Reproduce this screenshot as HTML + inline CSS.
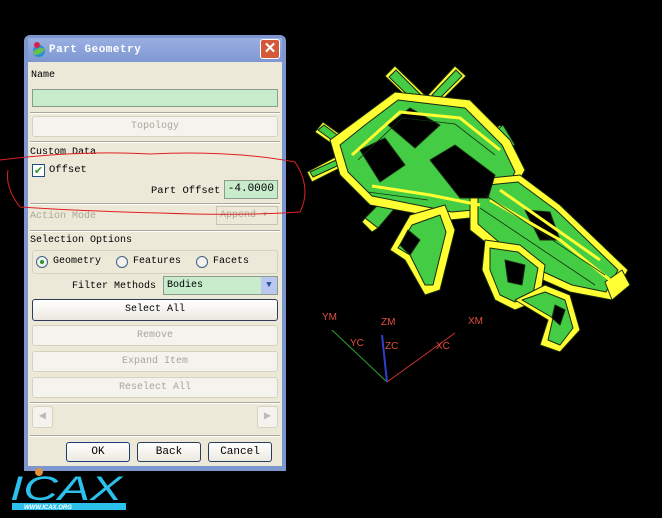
<!DOCTYPE html>
<html><head><meta charset="utf-8"><style>
*{margin:0;padding:0;box-sizing:border-box}
body{width:662px;height:518px;background:#000;position:relative;overflow:hidden;font-family:"Liberation Mono",monospace;font-size:10px;color:#000}
.a{position:absolute}
.dlg{left:24px;top:35px;width:262px;height:436px;background:#7d96cf;border-radius:6px 6px 0 0}
.body{left:28px;top:62px;width:254px;height:404px;background:#ece9d8}
.t{position:absolute;white-space:pre;line-height:12px}
.sep{position:absolute;left:30px;width:250px;height:2px;border-top:1px solid #aca899;border-bottom:1px solid #fff}
.btn{position:absolute;border:1px solid #d5d2c2;border-radius:3px;background:#f4f3ee;text-align:center;color:#a7a69a;line-height:19px}
.btnA{border:1px solid #2c3c5c;background:linear-gradient(#fff,#ece9df);color:#000}
.grn{position:absolute;background:#c7ebcb;border:1px solid #8c9c8c}
.rad{position:absolute;width:12px;height:12px;border:1px solid #3d5f8a;border-radius:50%;background:#f4f3ee}
</style></head><body>
<div class="a dlg"></div>
<div class="a" style="left:28px;top:38px;width:254px;height:24px;background:linear-gradient(#9ab0e2,#7f98d2)"></div>
<svg class="a" style="left:30px;top:40px" width="18" height="18"><circle cx="9" cy="11" r="6" fill="#2a8fcf"/><path d="M3 12 Q9 6 15 9 Q11 15 5 15Z" fill="#6cc04a"/><circle cx="7" cy="5" r="3" fill="#d8204a"/></svg>
<div class="t" style="left:49px;top:44px;color:#fff;font-size:11px;font-weight:bold;letter-spacing:0.5px">Part Geometry</div>
<div class="a" style="left:260px;top:39px;width:20px;height:20px;background:#d4593a;border:1px solid #fff;border-radius:3px;color:#fff;text-align:center;font:bold 15px/18px 'Liberation Sans',sans-serif">✕</div>
<div class="a body"></div>
<div class="t" style="left:31px;top:70px">Name</div>
<div class="grn" style="left:32px;top:89px;width:246px;height:18px"></div>
<div class="sep" style="top:112px"></div>
<div class="btn" style="left:32px;top:116px;width:246px;height:21px">Topology</div>
<div class="sep" style="top:141px"></div>
<div class="t" style="left:30px;top:147px">Custom Data</div>
<div class="a" style="left:32px;top:164px;width:13px;height:13px;border:1px solid #1c5180;background:#fff;color:#2a9a2a;font:bold 11px/11px 'DejaVu Sans',sans-serif;text-align:center">✔</div>
<div class="t" style="left:49px;top:164px;font-size:10.5px">Offset</div>
<div class="t" style="left:151px;top:185px;font-size:10.5px">Part Offset</div>
<div class="grn" style="left:224px;top:180px;width:54px;height:19px;text-align:right;padding-right:3px;line-height:17px;font-size:11px">-4.0000</div>
<div class="sep" style="top:203px"></div>
<div class="t" style="left:30px;top:211px;color:#aca899">Action Mode</div>
<div class="a" style="left:216px;top:206px;width:62px;height:19px;border:1px solid #c8c5b5;color:#aca899;line-height:17px;padding-left:3px">Append ▾</div>
<div class="sep" style="top:230px"></div>
<div class="t" style="left:30px;top:235px">Selection Options</div>
<div class="a" style="left:32px;top:250px;width:246px;height:24px;border:1px solid #d5d2c2;border-radius:3px"></div>
<div class="rad" style="left:36px;top:256px"></div><div class="a" style="left:40px;top:260px;width:4px;height:4px;border-radius:50%;background:#2a9a2a"></div>
<div class="t" style="left:53px;top:256px">Geometry</div>
<div class="rad" style="left:116px;top:256px"></div>
<div class="t" style="left:133px;top:256px">Features</div>
<div class="rad" style="left:196px;top:256px"></div>
<div class="t" style="left:213px;top:256px">Facets</div>
<div class="t" style="left:72px;top:281px">Filter Methods</div>
<div class="grn" style="left:163px;top:276px;width:115px;height:19px;line-height:17px;padding-left:3px">Bodies</div>
<div class="a" style="left:261px;top:277px;width:16px;height:17px;background:#b8c8ee;color:#2a4aa0;font-size:9px;text-align:center;line-height:17px">▼</div>
<div class="btn btnA" style="left:32px;top:299px;width:246px;height:22px">Select All</div>
<div class="btn" style="left:32px;top:325px;width:246px;height:21px">Remove</div>
<div class="btn" style="left:32px;top:351px;width:246px;height:21px">Expand Item</div>
<div class="btn" style="left:32px;top:377px;width:246px;height:21px">Reselect All</div>
<div class="sep" style="top:402px"></div>
<div class="btn" style="left:32px;top:406px;width:21px;height:22px;color:#bbb;font-size:12px">◀</div>
<div class="btn" style="left:257px;top:406px;width:21px;height:22px;color:#bbb;font-size:12px">▶</div>
<div class="sep" style="top:435px"></div>
<div class="btn btnA" style="left:66px;top:442px;width:64px;height:20px;font-size:11px;border-color:#1c3c7c">OK</div>
<div class="btn btnA" style="left:137px;top:442px;width:64px;height:20px;font-size:11px">Back</div>
<div class="btn btnA" style="left:208px;top:442px;width:64px;height:20px;font-size:11px">Cancel</div>

<svg class="a" style="left:0;top:0" width="662" height="518">
<g stroke-linejoin="round" stroke="#1a2a10" stroke-width="1">
<path d="M385 76 L395 66 L430 100 L420 110Z" fill="#ffff33"/>
<path d="M389 77 L396 70 L426 100 L419 106Z" fill="#44cc44"/>
<path d="M455 66 L466 76 L438 104 L428 95Z" fill="#ffff33"/>
<path d="M456 70 L462 76 L438 100 L432 95Z" fill="#44cc44"/>
<path d="M315 132 L323 122 L355 145 L348 155Z" fill="#ffff33"/>
<path d="M318 130 L324 125 L352 146 L347 151Z" fill="#44cc44"/>
<path d="M307 172 L345 152 L350 163 L312 182Z" fill="#ffff33"/>
<path d="M310 172 L345 156 L348 161 L313 177Z" fill="#44cc44"/>
<path d="M365 218 L385 198 L395 208 L378 228Z" fill="#44cc44"/>
<path d="M365 218 L378 228 L372 232 L362 222Z" fill="#ffff33"/>
<path d="M488 135 L500 125 L505 132 L493 142Z" fill="#ffff33"/>
<path d="M490 135 L503 125 L515 145 L500 150Z" fill="#44cc44"/>
<path d="M330 140 L360 118 L395 92 L470 100 L510 140 L525 170 L500 215 L450 220 L370 205 L340 175Z" fill="#ffff33"/>
<path d="M340 145 L365 125 L398 100 L465 108 L502 145 L515 172 L495 208 L452 212 L372 196 L348 172Z" fill="#44cc44"/>
<path d="M470 180 L520 175 L560 205 L628 270 L612 300 L570 292 L520 270 L470 230Z" fill="#ffff33"/>
<path d="M478 186 L518 182 L556 210 L618 270 L606 292 L572 285 L522 262 L478 224Z" fill="#44cc44"/>
<path d="M388 125 L410 108 L440 125 L415 148Z" fill="#000"/>
<path d="M360 150 L385 138 L405 165 L380 182Z" fill="#000"/>
<path d="M430 160 L455 145 L495 175 L488 198 L460 198Z" fill="#000"/>
<path d="M525 210 L550 212 L560 240 L540 240Z" fill="#000"/>
<path d="M410 215 L445 205 L455 230 L440 290 L425 295 L405 260 L390 250Z" fill="#ffff33"/>
<path d="M412 225 L440 215 L446 232 L433 285 L425 285 L410 255 L398 248Z" fill="#44cc44"/>
<path d="M408 230 L420 240 L410 255 L400 245Z" fill="#000"/>
<path d="M485 240 L520 245 L545 265 L540 300 L515 310 L495 300 L482 270Z" fill="#ffff33"/>
<path d="M490 248 L518 252 L538 268 L533 294 L515 302 L500 295 L490 270Z" fill="#44cc44"/>
<path d="M505 260 L525 265 L522 285 L508 282Z" fill="#000"/>
<path d="M515 300 L545 285 L570 295 L580 330 L560 352 L540 345 L548 320Z" fill="#ffff33"/>
<path d="M522 300 L545 292 L565 300 L573 328 L560 345 L548 340 L553 318Z" fill="#44cc44"/>
<path d="M555 305 L565 310 L560 325 L552 318Z" fill="#000"/>
<path d="M605 282 L622 270 L630 285 L612 300Z" fill="#ffff33"/>
</g>
<g stroke="#ffff33" stroke-width="3" fill="none">
<path d="M352 155 L400 112 L460 118 L500 150 M372 186 L430 195 L480 205 M490 200 L560 240 L610 280 M500 190 L600 260"/>
</g>
<g stroke="#113311" stroke-width="0.8" fill="none">
<path d="M358 160 L402 118 L455 124 L495 155 M368 192 L428 200 M485 195 L605 275 M480 208 L595 285"/>
</g>
<path d="M332 330 L387 382" stroke="#2fa02f" stroke-width="1"/>
<path d="M382 335 L387 382" stroke="#2f3fd0" stroke-width="2"/>
<path d="M455 333 L387 382" stroke="#d02f2f" stroke-width="1"/>
<g fill="#e05040" font-family="Liberation Sans,sans-serif" font-size="10">
<text x="322" y="320">YM</text><text x="350" y="346">YC</text><text x="381" y="325">ZM</text><text x="385" y="349">ZC</text><text x="468" y="324">XM</text><text x="436" y="349">XC</text>
</g>
<path d="M0 160 Q80 150 150 154 Q230 150 295 162 Q312 188 300 212 Q240 216 160 213 Q80 211 20 207 Q5 188 8 170" stroke="#e02020" stroke-width="1" fill="none"/>
<text x="10" y="500" fill="#2cc0ec" font-family="Liberation Sans,sans-serif" font-size="34" font-style="italic" textLength="112" lengthAdjust="spacingAndGlyphs">ICAX</text>
<circle cx="39" cy="472" r="4" fill="#e09040"/>
<rect x="12" y="503" width="114" height="7" fill="#2cc0ec"/>
<text x="24" y="509" fill="#fff" font-family="Liberation Sans,sans-serif" font-size="6" font-weight="bold" font-style="italic">WWW.ICAX.ORG</text>
</svg>
</body></html>
